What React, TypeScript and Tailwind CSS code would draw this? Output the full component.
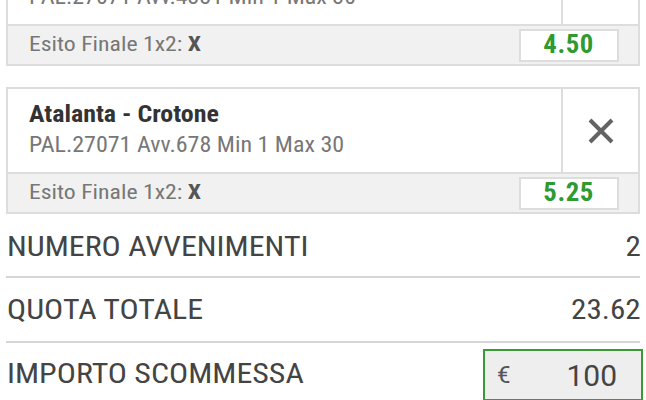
import React from 'react';

const cond = "[font-family:Roboto,'Liberation_Sans',sans-serif] [font-stretch:condensed]";

interface Bet {
  match: string;
  code: string;
  esito: string;
  quota: string;
}

const bets: Bet[] = [
  { match: 'Juventus - Sassuolo', code: 'PAL.27071 Avv.4331 Min 1 Max 30', esito: 'X', quota: '4.50' },
  { match: 'Atalanta - Crotone', code: 'PAL.27071 Avv.678 Min 1 Max 30', esito: 'X', quota: '5.25' },
];

const CloseIcon = () => (
  <svg width="28" height="28" viewBox="0 0 28 28" fill="none">
    <path d="M3 3L25 25M25 3L3 25" stroke="#636363" strokeWidth="4" />
  </svg>
);

const BetCard = ({ bet, className }: { bet: Bet; className?: string }) => (
  <div className={`border-2 border-[#dddddd] bg-white ${className ?? ''}`}>
    <div className="flex h-[83px]">
      <div className="flex-1 pl-[21px] pt-[10px]">
        <div className="text-[24px] leading-[30px] font-bold text-[#333]">
          <span className="inline-block origin-left scale-x-[1.08]">{bet.match}</span>
        </div>
        <div className="text-[22px] leading-[32px] text-[#777]">
          <span className="inline-block origin-left scale-x-[1.09]">{bet.code}</span>
        </div>
      </div>
      <div className="w-[77px] border-l-2 border-[#dddddd] flex items-center justify-center">
        <CloseIcon />
      </div>
    </div>
    <div className="h-[40px] border-t-2 border-[#dddddd] bg-[#f1f1f1] flex items-center justify-between pl-[21px] pr-[19px]">
      <div className="text-[21px] text-[#777]">
        <span className="inline-block origin-left scale-x-[1.13]">
          Esito Finale 1x2: <span className="font-bold text-[#555]">{bet.esito}</span>
        </span>
      </div>
      <div className="w-[100px] h-[33px] border-2 border-[#dddddd] bg-white flex items-center justify-center text-[25px] font-bold text-[#2f9a2f] tracking-[0.5px]">
        <span className="inline-block scale-x-[1.07]">{bet.quota}</span>
      </div>
    </div>
  </div>
);

const Row = ({ label, value, h }: { label: string; value: string; h: string }) => (
  <div className={`flex items-center justify-between ${h} text-[28px] text-[#444] pl-[1px] -mr-[1px]`}>
    <span className="inline-block origin-left scale-x-[1.14]">{label}</span>
    <span className="inline-block origin-right scale-x-[1.11]">{value}</span>
  </div>
);

export default function App() {
  return (
    <div className={`w-[646px] h-[400px] overflow-hidden bg-white px-[6px] ${cond}`}>
      <BetCard bet={bets[0]} className="-mt-[61px]" />
      <BetCard bet={bets[1]} className="mt-[21px]" />

      <Row label="NUMERO AVVENIMENTI" value="2" h="h-[62px] pt-[3px]" />
      <div className="h-[2px] bg-[#d6d6d6]" />
      <Row label="QUOTA TOTALE" value="23.62" h="h-[63px]" />
      <div className="h-[2px] bg-[#d6d6d6]" />
      <div className="flex items-center justify-between h-[57px] text-[28px] text-[#444] pl-[1px] -mr-[3px] pt-[1px]">
        <span className="mt-[4px] inline-block origin-left scale-x-[1.14]">IMPORTO SCOMMESSA</span>
        <div className="w-[160px] h-[52px] mt-[6px] border-2 border-[#3a9a35] bg-[#eeeeee] flex items-center pl-[12px] pr-[24px] [font-stretch:normal]">
          <span className="text-[24px] text-[#555]">€</span>
          <span className="ml-auto text-[30px] text-[#444]">100</span>
        </div>
      </div>
    </div>
  );
}
